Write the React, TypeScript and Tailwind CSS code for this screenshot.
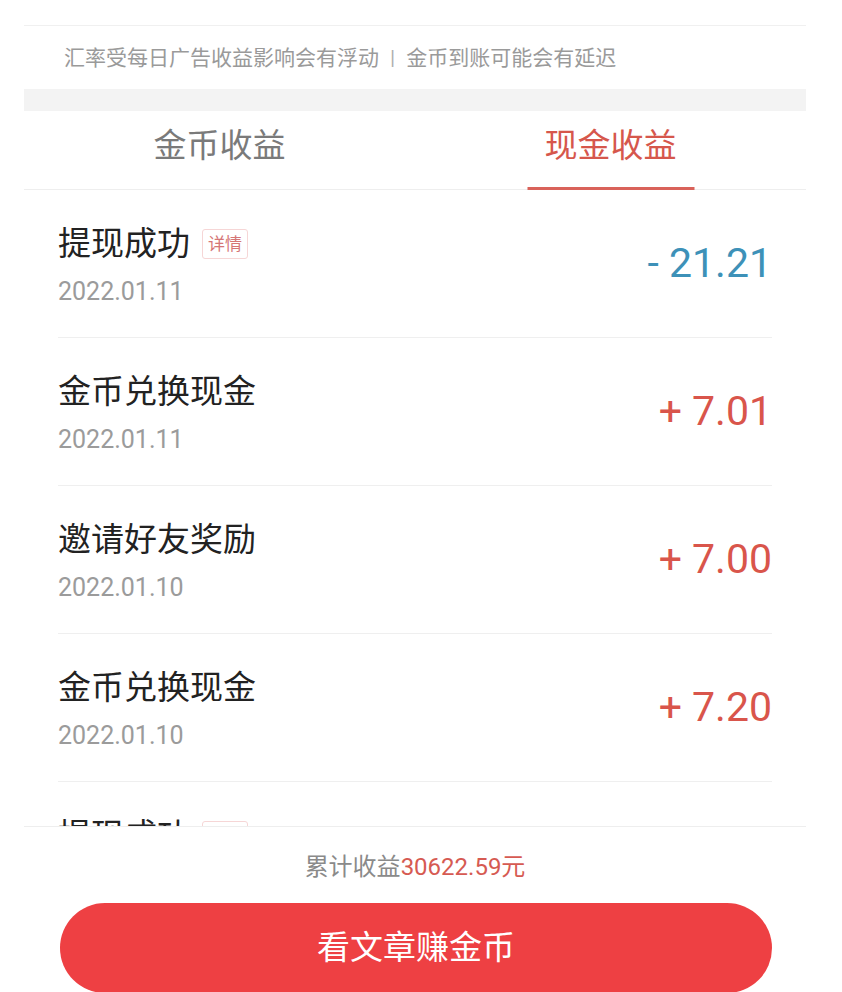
import React from "react";

const rows = [
  { title: "提现成功", date: "2022.01.11", amount: "- 21.21", out: true, detail: true },
  { title: "金币兑换现金", date: "2022.01.11", amount: "+ 7.01" },
  { title: "邀请好友奖励", date: "2022.01.10", amount: "+ 7.00" },
  { title: "金币兑换现金", date: "2022.01.10", amount: "+ 7.20" },
  { title: "提现成功", date: "2022.01.10", amount: "- 20.00", out: true, detail: true },
];

const font = { fontFamily: 'Roboto, "Noto Sans CJK SC", sans-serif' };

export default function App() {
  return (
    <div className="flex h-[992px] w-[842px] flex-col overflow-hidden bg-white" style={font}>
      {/* 提示 */}
      <div className="ml-[24px] mt-[25px] w-[782px] border-t border-[#f0f0f0]">
        <div className="flex h-[63px] items-center pl-[40px] pt-[3px] text-[21px] text-[#9a9a9a]">
          <span>汇率受每日广告收益影响会有浮动</span>
          <span className="mx-[11px] text-[#b0b0b0]">|</span>
          <span>金币到账可能会有延迟</span>
        </div>
        <div className="h-[22px] bg-[#f3f3f3]" />
      </div>

      {/* Tabs */}
      <div className="ml-[24px] flex h-[79px] w-[782px] border-b border-[#eeeeee]">
        <div className="flex flex-1 items-center justify-center pb-[8px] text-[33px] text-[#7a7a7a]">金币收益</div>
        <div className="relative flex flex-1 items-center justify-center pb-[8px] text-[33px] text-[#d6574c]">
          现金收益
          <div className="absolute bottom-[-1px] left-1/2 h-[3px] w-[167px] -translate-x-1/2 bg-[#d9625a]" />
        </div>
      </div>

      {/* 列表 */}
      <div className="ml-[24px] w-[782px] flex-1 overflow-hidden px-[34px]">
        {rows.map((r, i) => (
          <div key={i} className="flex h-[148px] items-center justify-between border-b border-[#efefef]">
            <div className="flex flex-col pt-[3px]">
              <div className="flex items-center">
                <span className="text-[33px] leading-[40px] text-[#222222]">{r.title}</span>
                {r.detail && (
                  <span className="ml-[12px] rounded-[3px] border border-[#f6d6d6] px-[5px] text-[17px] leading-[28px] text-[#d57676]">
                    详情
                  </span>
                )}
              </div>
              <span className="mt-[13px] text-[25px] leading-[30px] text-[#9b9b9b]">{r.date}</span>
            </div>
            <span className={`text-[41px] ${r.out ? "text-[#3d91b8]" : "text-[#d9554b]"}`}>{r.amount}</span>
          </div>
        ))}
      </div>

      {/* 底部 */}
      <div className="ml-[24px] h-[166px] w-[782px] shrink-0 border-t border-[#eeeeee] bg-white">
        <div className="mt-[25px] text-center text-[24px] leading-[30px] text-[#8a8a8a]">
          累计收益<span className="text-[#d65a52]">30622.59元</span>
        </div>
        <button className="ml-[36px] mt-[21px] flex h-[90px] w-[712px] items-center justify-center rounded-full bg-[#ee4043] text-[33px] text-white">
          看文章赚金币
        </button>
      </div>
    </div>
  );
}
